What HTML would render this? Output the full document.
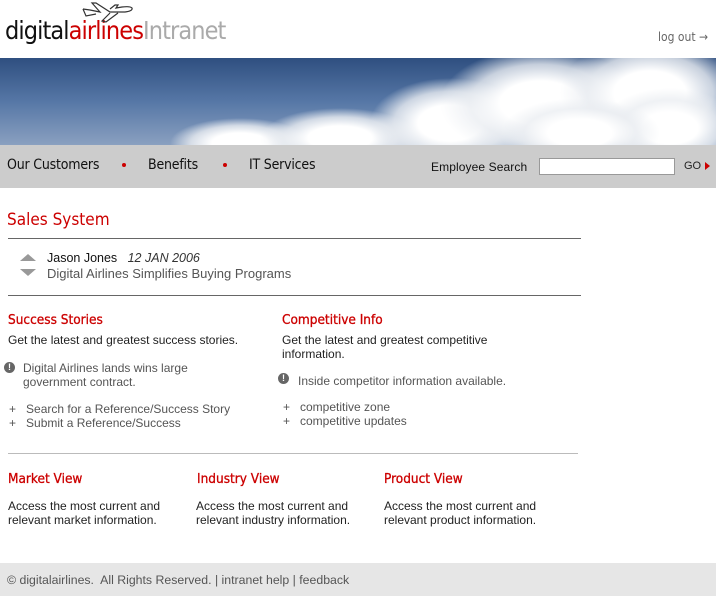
<!DOCTYPE html>
<html><head><meta charset="utf-8"><style>
*{margin:0;padding:0;box-sizing:border-box}
body{width:716px;height:596px;position:relative;background:#fff;font-family:"Liberation Sans",Arial,sans-serif;overflow:hidden}
.a{position:absolute;white-space:nowrap}
.dv{font-family:"DejaVu Sans Condensed","DejaVu Sans",sans-serif}
.red{color:#cc0000}
.g{color:#555;font-size:12px}
.h{font-size:13.5px;color:#cc0000;font-family:"DejaVu Sans Condensed","DejaVu Sans",sans-serif;-webkit-text-stroke:0.3px #cc0000}
.ex{position:absolute;width:11px;height:11px;border-radius:50%;background:#666;color:#fff;font-size:9px;font-weight:bold;text-align:center;line-height:11px}
.c{position:absolute;border-radius:50%;background:radial-gradient(closest-side,#fff 40%,rgba(235,238,242,.8) 70%,rgba(200,210,225,0))}
</style></head><body>
<div class="a dv" style="left:5px;top:16px;font-size:25px;letter-spacing:-0.9px;color:#111">digital<span class="red">airlines</span><span style="color:#aaa">Intranet</span></div>
<svg class="a" style="left:80px;top:1px" width="56" height="24" viewBox="0 0 56 24"><path d="M3 8 L10 9 L20 11 L12 2 L16 2 L30 11 L45 11 Q53 10 52 7 Q50 5 42 6 L36 7 L38 4 L35 4 L30 8 M30 12 L22 20 L26 21 L38 12" fill="none" stroke="#333" stroke-width="1.2"/><path d="M3 8 L6 15 L16 13" fill="none" stroke="#333" stroke-width="1.2"/></svg>
<div class="a dv" style="left:658px;top:30px;font-size:12px;color:#666">log out →</div>
<div class="a" style="left:0;top:58px;width:716px;height:87px;overflow:hidden;background:linear-gradient(180deg,#2f4f80,#5677a6 50%,#8aa0c0)">
<div class="c" style="left:170px;top:60px;width:140px;height:50px"></div>
<div class="c" style="left:260px;top:50px;width:160px;height:60px"></div>
<div class="c" style="left:370px;top:20px;width:160px;height:90px"></div>
<div class="c" style="left:440px;top:-10px;width:200px;height:110px"></div>
<div class="c" style="left:560px;top:-20px;width:180px;height:110px"></div>
<div class="c" style="left:600px;top:30px;width:140px;height:80px"></div>
<div class="c" style="left:500px;top:40px;width:160px;height:70px"></div>
</div>
<div class="a" style="left:0;top:145px;width:716px;height:43px;background:#cccccc"></div>
<div class="a dv" style="left:7px;top:157px;font-size:14px;color:#111;letter-spacing:-0.2px">Our Customers</div>
<div class="a" style="left:122px;top:163px;width:4px;height:4px;border-radius:50%;background:#c00"></div>
<div class="a dv" style="left:148px;top:157px;font-size:14px;color:#111;letter-spacing:-0.2px">Benefits</div>
<div class="a" style="left:223px;top:163px;width:4px;height:4px;border-radius:50%;background:#c00"></div>
<div class="a dv" style="left:249px;top:157px;font-size:14px;color:#111;letter-spacing:-0.2px">IT Services</div>
<div class="a" style="left:431px;top:160px;font-size:12px;color:#111;letter-spacing:0.1px">Employee Search</div>
<div class="a" style="left:539px;top:158px;width:136px;height:17px;background:#fff;border:1px solid #999"></div>
<div class="a" style="left:684px;top:160px;font-size:11px;color:#222">GO</div>
<div class="a" style="left:705px;top:162px;width:0;height:0;border-left:5px solid #c00;border-top:4px solid transparent;border-bottom:4px solid transparent"></div>
<div class="a dv" style="left:7px;top:210px;font-size:17px;color:#cc0000">Sales System</div>
<div class="a" style="left:8px;top:238px;width:573px;height:1px;background:#666"></div>
<div class="a" style="left:20px;top:254px;border-bottom:7px solid #999;border-left:8px solid transparent;border-right:8px solid transparent"></div>
<div class="a" style="left:20px;top:269px;border-top:7px solid #999;border-left:8px solid transparent;border-right:8px solid transparent"></div>
<div class="a" style="left:47px;top:251px;font-size:12.5px;color:#111">Jason Jones &nbsp;&nbsp;<i style="color:#333">12 JAN 2006</i></div>
<div class="a" style="left:47px;top:266px;font-size:13px;color:#555">Digital Airlines Simplifies Buying Programs</div>
<div class="a" style="left:8px;top:295px;width:573px;height:1px;background:#666"></div>
<div class="a h" style="left:8px;top:312px">Success Stories</div>
<div class="a" style="left:8px;top:333px;font-size:12px;color:#222">Get the latest and greatest success stories.</div>
<div class="ex" style="left:4px;top:362px">!</div>
<div class="a g" style="left:23px;top:361px;line-height:14px">Digital Airlines lands wins large<br>government contract.</div>
<div class="a g" style="left:9px;top:402px;line-height:14px">+&nbsp;&nbsp; Search for a Reference/Success Story<br>+&nbsp;&nbsp; Submit a Reference/Success</div>
<div class="a h" style="left:282px;top:312px">Competitive Info</div>
<div class="a" style="left:282px;top:333px;font-size:12px;color:#222;line-height:14px">Get the latest and greatest competitive<br>information.</div>
<div class="ex" style="left:278px;top:373px">!</div>
<div class="a g" style="left:298px;top:374px">Inside competitor information available.</div>
<div class="a g" style="left:283px;top:400px;line-height:14px">+&nbsp;&nbsp; competitive zone<br>+&nbsp;&nbsp; competitive updates</div>
<div class="a" style="left:8px;top:453px;width:570px;height:1px;background:#bbb"></div>
<div class="a h" style="left:8px;top:471px">Market View</div>
<div class="a h" style="left:197px;top:471px">Industry View</div>
<div class="a h" style="left:384px;top:471px">Product View</div>
<div class="a" style="left:8px;top:499px;font-size:12px;color:#222;line-height:14px">Access the most current and<br>relevant market information.</div>
<div class="a" style="left:196px;top:499px;font-size:12px;color:#222;line-height:14px">Access the most current and<br>relevant industry information.</div>
<div class="a" style="left:384px;top:499px;font-size:12px;color:#222;line-height:14px">Access the most current and<br>relevant product information.</div>
<div class="a" style="left:0;top:563px;width:716px;height:33px;background:#e6e6e6"></div>
<div class="a" style="left:7px;top:573px;font-size:12.3px;color:#555">© digitalairlines.&nbsp; All Rights Reserved. | intranet help | feedback</div>
</body></html>
